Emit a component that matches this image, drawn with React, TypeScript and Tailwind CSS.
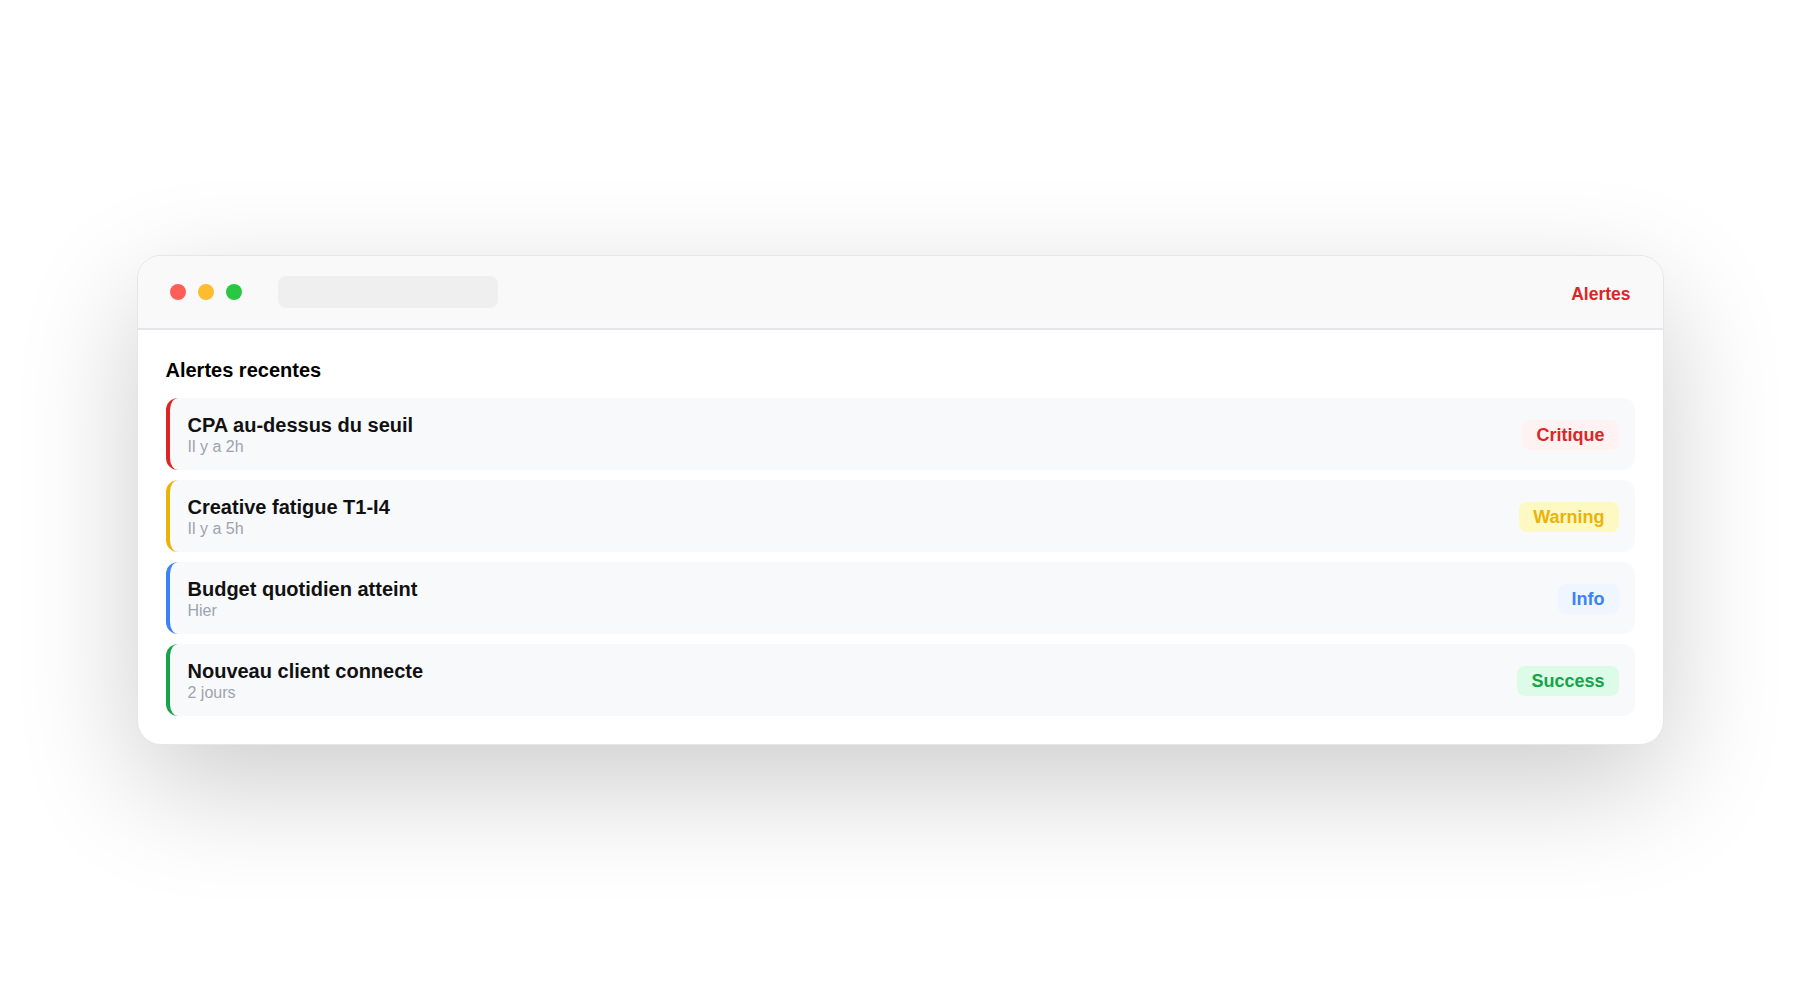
const alerts = [
  {
    title: "CPA au-dessus du seuil",
    time: "Il y a 2h",
    label: "Critique",
    bar: "border-l-[#dc2626]",
    badge: "bg-[#fef2f2] text-[#dc2626]",
  },
  {
    title: "Creative fatigue T1-I4",
    time: "Il y a 5h",
    label: "Warning",
    bar: "border-l-[#eab308]",
    badge: "bg-[#fef9c3] text-[#eab308]",
  },
  {
    title: "Budget quotidien atteint",
    time: "Hier",
    label: "Info",
    bar: "border-l-[#3b82f6]",
    badge: "bg-[#eff6ff] text-[#3b82f6]",
  },
  {
    title: "Nouveau client connecte",
    time: "2 jours",
    label: "Success",
    bar: "border-l-[#16a34a]",
    badge: "bg-[#dcfce7] text-[#16a34a]",
  },
];

const App = () => {
  return (
    <div
      className="min-h-screen w-full bg-white flex items-center justify-center"
      style={{ fontFamily: '"Liberation Sans", Arial, sans-serif' }}
    >
      {/* Window */}
      <div className="w-[1527px] rounded-[24px] border border-[#e6e6e6] bg-white overflow-hidden shadow-[0_40px_120px_rgba(0,0,0,0.2)]">
        {/* Title bar */}
        <div className="h-[74px] bg-[#f9f9f9] border-b-2 border-[#e6e6ea] flex items-center px-8">
          <div className="flex items-center gap-3">
            <span className="w-4 h-4 rounded-full bg-[#ff5f57]"></span>
            <span className="w-4 h-4 rounded-full bg-[#febc2e]"></span>
            <span className="w-4 h-4 rounded-full bg-[#28c840]"></span>
          </div>
          <div className="ml-9 w-[220px] h-8 rounded-lg bg-[#efefef]"></div>
          <div className="ml-auto mt-1 text-[17.5px] font-bold text-[#dc2626]">
            Alertes
          </div>
        </div>

        {/* Content */}
        <div className="px-7 pt-[26px] pb-7">
          <h2 className="text-xl leading-7 font-bold text-black mb-[14px]">
            Alertes recentes
          </h2>

          <div className="flex flex-col gap-[10px]">
            {alerts.map((alert, index) => (
              <div
                key={index}
                className={`h-[72px] rounded-xl bg-[#f8f9fb] border-l-4 ${alert.bar} pl-[18px] pr-4 flex items-center justify-between`}
              >
                <div className="flex flex-col">
                  <div className="text-xl leading-6 font-bold text-[#111]">
                    {alert.title}
                  </div>
                  <div className="text-base leading-[19px] text-[#9ca3af]">
                    {alert.time}
                  </div>
                </div>
                <span
                  className={`mt-0.5 px-3.5 py-1 rounded-lg text-lg leading-[22px] font-bold ${alert.badge}`}
                >
                  {alert.label}
                </span>
              </div>
            ))}
          </div>
        </div>
      </div>
    </div>
  );
};

export default App;
